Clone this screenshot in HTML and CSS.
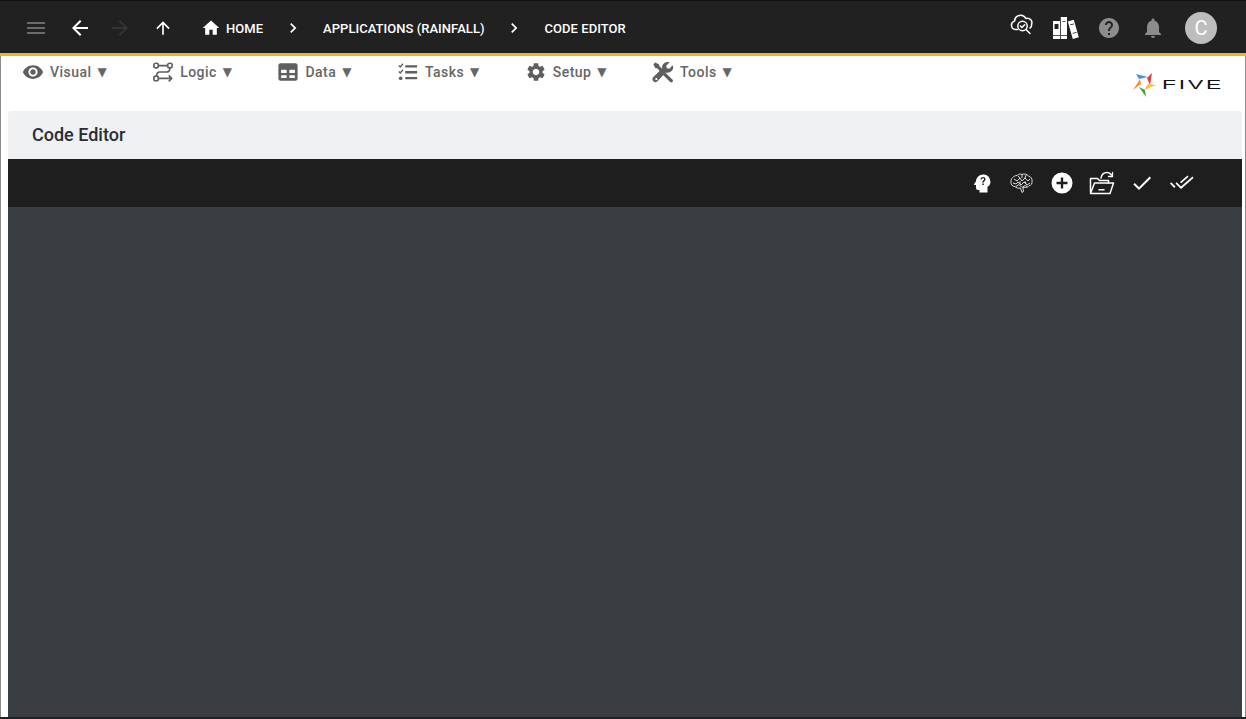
FILE: index.html
```html
<!DOCTYPE html>
<html lang="en">
<head>
<meta charset="utf-8">
<title>Code Editor</title>
<link rel="stylesheet" href="styles.css">
</head>
<body>
<div class="app">
  <header class="topbar">
    <svg class="ico dim menu-ico" viewBox="0 0 24 24"><path d="M3 18h18v-2H3v2zm0-5h18v-2H3v2zm0-7v2h18V6H3z"/></svg>
    <svg class="ico back-ico" viewBox="0 0 24 24"><path d="M20 11H7.830l5.590-5.590L12 4l-8 8 8 8 1.410-1.410L7.830 13H20v-2z"/></svg>
    <svg class="ico faint forward-ico" viewBox="0 0 24 24"><path d="M12 4l-1.410 1.410L16.170 11H4v2h12.170l-5.580 5.590L12 20l8-8z"/></svg>
    <svg class="ico up-ico" viewBox="0 0 24 24"><path d="M4 12l1.410 1.410L11 7.830V20h2V7.830l5.580 5.590L20 12l-8-8-8 8z"/></svg>
    <svg class="ico home-ico" viewBox="0 0 24 24"><path d="M10 20v-6h4v6h5v-8h3L12 3 2 12h3v8z"/></svg>
    <span class="crumb">HOME</span>
    <svg class="ico chevron" viewBox="0 0 24 24"><path d="M10 6L8.590 7.410 13.170 12l-4.580 4.590L10 18l6-6z"/></svg>
    <span class="crumb">APPLICATIONS (RAINFALL)</span>
    <svg class="ico chevron chevron-last" viewBox="0 0 24 24"><path d="M10 6L8.590 7.410 13.170 12l-4.580 4.590L10 18l6-6z"/></svg>
    <span class="crumb">CODE EDITOR</span>
    <div class="top-actions">
      <svg class="ico line cloud" viewBox="0 0 24 24" stroke-width="1.500" stroke-linecap="round" stroke-linejoin="round"><path d="M7.500 17.500H5.500a4.300 4.300 0 0 1-1-8.400A6 6 0 0 1 15.800 6.500a4.500 4.500 0 0 1 5.700 6 3.300 3.300 0 0 1-1.500 3.500"/><circle cx="12.500" cy="14" r="4.700"/><path d="M10.500 14l1.500 1.500 2.600-2.800M16 17.500l4 4"/></svg>
      <svg class="ico books" viewBox="0 0 26 26"><path d="M0 6h7v18H0zM7.800 2h6.200v22H7.800z"/><path d="M14.800 6.500l6-1.700 5 17.500-6 1.700z"/><path class="book-mark" d="M1.500 9h4v5h-4zM0 20h7v.8H0zM7.800 20h6.200v.8H7.800zM9.500 6h3v.8h-3zM17 9.500l4-1.100.2.800-4 1.100zM19.500 18l4-1.100.2.800-4 1.100z"/></svg>
      <svg class="ico dim2" viewBox="0 0 24 24"><path d="M12 2C6.480 2 2 6.480 2 12s4.480 10 10 10 10-4.480 10-10S17.520 2 12 2zm1 17h-2v-2h2v2zm2.070-7.750l-.9.920C13.450 12.900 13 13.500 13 15h-2v-.5c0-1.100.450-2.100 1.170-2.830l1.240-1.260c.370-.360.590-.860.590-1.410 0-1.100-.9-2-2-2s-2 .9-2 2H8c0-2.210 1.790-4 4-4s4 1.790 4 4c0 .880-.360 1.680-.930 2.250z"/></svg>
      <svg class="ico dim2" viewBox="0 0 24 24"><path d="M12 22c1.100 0 2-.9 2-2h-4c0 1.100.890 2 2 2zm6-6v-5c0-3.070-1.640-5.640-4.500-6.320V4c0-.830-.670-1.500-1.500-1.500s-1.500.670-1.500 1.500v.680C7.630 5.360 6 7.920 6 11v5l-2 2v1h16v-1l-2-2z"/></svg>
      <div class="avatar">C</div>
    </div>
  </header>

  <div class="page">
    <nav class="menubar">
      <div class="menu-item">
        <svg class="mico" viewBox="0 0 24 24"><path d="M12 4.500C7 4.500 2.730 7.610 1 12c1.730 4.390 6 7.500 11 7.500s9.270-3.110 11-7.500c-1.730-4.390-6-7.500-11-7.500zM12 17c-2.760 0-5-2.240-5-5s2.240-5 5-5 5 2.240 5 5-2.240 5-5 5zm0-8c-1.660 0-3 1.340-3 3s1.340 3 3 3 3-1.340 3-3-1.340-3-3-3z"/></svg>
        <span>Visual</span><span class="caret">▼</span>
      </div>
      <div class="menu-item">
        <svg class="mico line-dark" viewBox="0 0 24 24" stroke-width="1.800" stroke-linecap="round" stroke-linejoin="round"><rect x="2" y="2.500" width="5" height="5" rx="2.200"/><rect x="17" y="2.500" width="5" height="5" rx="2.200"/><rect x="2" y="16.500" width="5" height="5" rx="2.200"/><path d="M7 5h10M19.500 7.500c0 3-2 4.500-4 4.500h-7c-2 0-3.500 1.500-3.500 4.500M7 19h14.500M18.800 16.300l2.700 2.700-2.700 2.700"/></svg>
        <span>Logic</span><span class="caret">▼</span>
      </div>
      <div class="menu-item">
        <svg class="mico" viewBox="0 0 24 24"><path fill-rule="evenodd" d="M4 2.500h16a2.500 2.500 0 0 1 2.500 2.500v14a2.500 2.500 0 0 1-2.500 2.500H4A2.500 2.500 0 0 1 1.500 19V5A2.500 2.500 0 0 1 4 2.500zM4.500 9.500v3.500h6V9.500zm9 0v3.500h6V9.500zm-9 6v3h6v-3zm9 0v3h6v-3z"/></svg>
        <span>Data</span><span class="caret">▼</span>
      </div>
      <div class="menu-item">
        <svg class="mico" viewBox="0 0 24 24"><path d="M9 4.500h13v2.500H9zM9 11h13v2.500H9zM9 17.500h13V20H9z"/><path class="tick" d="M2 5l1.500 1.500L6.500 3M2 11.500L3.500 13l3-3.500"/><circle cx="4" cy="18.800" r="2"/></svg>
        <span>Tasks</span><span class="caret">▼</span>
      </div>
      <div class="menu-item">
        <svg class="mico" viewBox="0 0 24 24"><path d="M19.140 12.940c.040-.3.060-.610.060-.940 0-.320-.020-.640-.070-.940l2.030-1.580c.180-.140.230-.410.120-.610l-1.920-3.320c-.120-.220-.370-.290-.590-.220l-2.390.960c-.5-.380-1.030-.7-1.620-.94l-.360-2.540c-.040-.240-.240-.410-.480-.410h-3.840c-.240 0-.430.170-.470.410l-.360 2.540c-.590.240-1.130.570-1.620.94l-2.390-.96c-.220-.080-.470 0-.590.220L2.740 8.870c-.120.210-.080.470.120.610l2.030 1.580c-.050.3-.090.630-.09.940s.020.640.07.940l-2.030 1.580c-.180.140-.23.410-.12.610l1.920 3.320c.120.220.37.290.59.220l2.390-.96c.5.380 1.030.7 1.620.94l.360 2.540c.050.240.240.410.48.410h3.840c.240 0 .440-.17.470-.41l.360-2.540c.590-.24 1.130-.56 1.620-.94l2.390.96c.220.080.470 0 .590-.22l1.920-3.320c.120-.220.070-.47-.12-.61l-2.010-1.580zM12 15.600c-1.980 0-3.600-1.620-3.600-3.600s1.620-3.600 3.600-3.600 3.600 1.620 3.600 3.600-1.620 3.600-3.600 3.600z"/></svg>
        <span>Setup</span><span class="caret">▼</span>
      </div>
      <div class="menu-item">
        <svg class="mico" viewBox="0 0 24 24"><path d="M1.500 3.500L3.500 1.500 7.500 3.500 8 5.500 11.500 9 9 11.500 5.500 8 3.500 7.500z"/><path d="M14.500 12.500l8 8a1.800 1.800 0 0 1 0 2.200l-.5.300a1.800 1.800 0 0 1-2.200 0l-8-8z"/><path fill-rule="evenodd" d="M17 1a6 6 0 0 1 2.300.4L15.500 5.200l.6 2.700 2.700.6 3.800-3.800A6 6 0 0 1 15 12.500L6 22a3 3 0 0 1-4.500-4.500l9.500-9.300A6 6 0 0 1 17 1zM3.900 18.800a1.200 1.200 0 1 0 1.700 1.700 1.200 1.200 0 0 0-1.700-1.700z"/></svg>
        <span>Tools</span><span class="caret">▼</span>
      </div>
      <div class="logo">
        <svg class="logo-mark" viewBox="0 0 24 24">
          <polygon points="3,1 15,4 6,6" fill="#4a90e2"/>
          <polygon points="19,0 17,12 14,5" fill="#e53935"/>
          <polygon points="23,12 11,17 15,11" fill="#fbc02d"/>
          <polygon points="13,24 6,14 12,17" fill="#43a047"/>
          <polygon points="0,17 7,6 8,11" fill="#fb8c3c"/>
        </svg>
        <span class="logo-text">FIVE</span>
      </div>
    </nav>

    <section class="title-panel"><h1>Code Editor</h1></section>

    <div class="toolbar">
      <div class="tool">
        <svg class="tico" viewBox="0 0 24 24"><path d="M13 3.500a7 7 0 0 0-7 6.800L4.200 13c-.3.500 0 1 .5 1H6v3a2 2 0 0 0 2 2h1.500v2.500h8v-5.400A7 7 0 0 0 13 3.500z"/><path class="knock" d="M12.300 12.500h1.500V14h-1.500zM13.800 11.500h-1.500c0-2 1.800-2 1.800-3.200 0-.6-.5-1-1.100-1s-1.100.4-1.200 1.100h-1.300c.1-1.400 1.200-2.300 2.500-2.300 1.400 0 2.500.9 2.500 2.200 0 1.700-1.700 1.900-1.700 3.200z"/></svg>
      </div>
      <div class="tool">
        <svg class="tico brain" viewBox="0 0 24 24" stroke-width="1"><path d="M7 4.500c2-2 4-1.500 5-1 2-1 5-.5 6.500 1.500 2.500.5 4 3 3.500 5.500.5 2-1 4-3 4.300-1 1.500-3 2-5 1.500l-1 .7.500 3.500-1.500 1-1.500-4.500c-2 .5-4.500 0-5.500-1.500-2.500 0-4.500-2-4-4.500C.5 8 3.500 4.500 7 4.500z"/><path d="M4 8l3 2 3-3 2 3 3-3 3 3 2-2M3 12l3 1 2-2 3 3 3-3 3 3 3-2M6 15.500l3-2 3 3 3-2 2 1M8 5l2 2M12 3.500V7M16 4l-1 3M10 10v3M15 10l1 3" stroke-linejoin="round"/></svg>
      </div>
      <div class="tool">
        <svg class="tico" viewBox="0 0 24 24"><path fill-rule="evenodd" d="M12 1.500a10.500 10.500 0 1 1 0 21 10.500 10.500 0 0 1 0-21zM10.800 6.500v4.300H6.500v2.400h4.300v4.300h2.400v-4.300h4.300v-2.400h-4.300V6.500z"/></svg>
      </div>
      <div class="tool">
        <svg class="tico large line" viewBox="0 0 26 26" stroke-width="1.500" stroke-linejoin="round" stroke-linecap="round"><path d="M1.500 22V8.500h7l2 2h9V13"/><path d="M1.500 23.500l4-10.500h19l-3.500 10.500z"/><path d="M10 19.800h5"/><path d="M12 8c.5-3 2.500-5.500 6-5.500 2 0 3.500 1 4.500 2.500"/><path d="M23.500 2.500v4h-4" stroke-width="1.300"/></svg>
      </div>
      <div class="tool">
        <svg class="tico" viewBox="0 0 24 24"><path d="M9 16.200L4.800 12l-1.400 1.400L9 19 21 7l-1.400-1.400z"/></svg>
      </div>
      <div class="tool">
        <svg class="tico large" viewBox="0 0 26 26"><path d="M1 13.500l1.200-1.200 4.300 4.300L5.300 18zM6.500 13.500l1.200-1.200 4.300 4.300 11.500-10L24.500 8 12 19zM11 12l7.500-6.500 1.100 1.200-7.400 6.500z"/></svg>
      </div>
    </div>

    <main class="editor"></main>
  </div>
</div>
</body>
</html>
```

FILE: styles.css
```css
* {
  box-sizing: border-box;
}

html,
body {
  margin: 0;
  height: 100%;
  overflow: hidden;
}

body {
  font-family: Roboto, "Liberation Sans", sans-serif;
  background: #fff;
}

.app {
  display: flex;
  flex-direction: column;
  height: 719px;
  border-top: 1px solid #111;
  border-bottom: 2px solid #222;
}

.topbar {
  display: flex;
  align-items: center;
  flex: none;
  height: 55px;
  padding: 1px 29px 0 24px;
  background: #212121;
  border-bottom: 3px solid #f2b327;
}

.ico {
  flex: none;
  width: 24px;
  height: 24px;
  fill: #fff;
}

.ico.dim {
  fill: #6b6b6b;
}

.ico.dim2 {
  fill: #8c8c8c;
}

.ico.faint {
  fill: #333;
}

.ico.line,
.tico.line {
  fill: none;
  stroke: #fff;
}

.ico.cloud {
  margin: 0 -3px 7px 3px;
}

.book-mark {
  fill: #212121;
}

.back-ico {
  margin-left: 20px;
}

.forward-ico {
  margin-left: 16px;
}

.ico.up-ico {
  width: 20px;
  height: 20px;
  margin-left: 21px;
}

.ico.home-ico {
  width: 20px;
  height: 20px;
  margin-left: 28px;
  margin-right: 5px;
}

.crumb {
  margin-top: 2px;
  color: #fff;
  font-size: 13px;
  font-weight: 500;
  letter-spacing: 0.04px;
  white-space: nowrap;
}

.ico.chevron {
  width: 20px;
  height: 20px;
  margin: 0 20px;
}

.ico.chevron-last {
  margin: 0 21px 0 19px;
}

.top-actions {
  display: flex;
  align-items: center;
  gap: 20px;
  margin-left: auto;
}

.ico.books {
  width: 26px;
  height: 26px;
  margin: 0 -2px 0 2px;
}

.avatar {
  display: flex;
  align-items: center;
  justify-content: center;
  width: 32px;
  height: 32px;
  border-radius: 50%;
  background: #bdbdbd;
  color: #fff;
  font-size: 20px;
}

.page {
  display: flex;
  flex: 1;
  flex-direction: column;
  min-height: 0;
  padding: 0 3px 0 7px;
  border-left: 1px solid #8a8a8a;
  border-right: 1px solid #8a8a8a;
}

.menubar {
  display: flex;
  align-items: flex-start;
  flex: none;
  gap: 45.5px;
  height: 55px;
  padding: 5px 0 0 14px;
}

.menu-item {
  display: flex;
  align-items: center;
  height: 22px;
  color: #666;
  font-size: 14px;
  font-weight: 500;
  letter-spacing: 0.45px;
}

.mico {
  flex: none;
  width: 22px;
  height: 22px;
  margin-right: 6px;
  fill: #5f5f5f;
}

.mico.line-dark {
  fill: none;
  stroke: #5f5f5f;
}

.tick {
  fill: none;
  stroke: #5f5f5f;
  stroke-width: 1.500;
}

.caret {
  margin-left: 6px;
  font-family: "DejaVu Sans", sans-serif;
  font-size: 12px;
  letter-spacing: 0;
}

.logo {
  display: flex;
  align-items: center;
  gap: 5px;
  margin: 12px 20px 0 auto;
}

.logo-mark {
  width: 24px;
  height: 24px;
}

.logo-text {
  display: inline-block;
  width: 60px;
  color: #111;
  font-family: "Liberation Sans", sans-serif;
  font-size: 12px;
  letter-spacing: 1.500px;
  line-height: 14px;
  transform: scaleX(1.900);
  transform-origin: left center;
}

.title-panel {
  display: flex;
  align-items: center;
  flex: none;
  height: 48px;
  padding: 0 0 2px 24px;
  border-radius: 4px 4px 0 0;
  background: #f0f1f3;
}

.title-panel h1 {
  margin: 0;
  color: #2a2d31;
  font-size: 18px;
  font-weight: 500;
}

.toolbar {
  display: flex;
  align-items: center;
  justify-content: flex-end;
  flex: none;
  height: 48px;
  padding-right: 40px;
  background: #1e1e1e;
}

.tool {
  display: flex;
  align-items: center;
  justify-content: center;
  width: 40px;
  height: 40px;
}

.tico {
  width: 24px;
  height: 24px;
  fill: #fff;
}

.tico.large {
  width: 26px;
  height: 26px;
}

.tico.brain {
  fill: none;
  stroke: #dcdcdc;
}

.knock {
  fill: #1e1e1e;
}

.editor {
  flex: 1;
  background: #3a3d41;
}
```
